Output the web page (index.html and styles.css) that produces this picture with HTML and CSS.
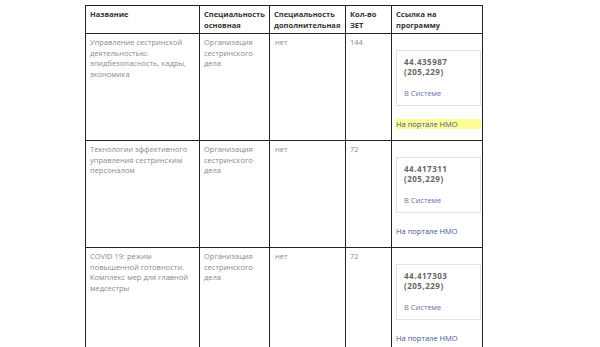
FILE: index.html
```html
<!DOCTYPE html>
<html lang="ru">
  <head>
    <meta charset="UTF-8" />
    <meta name="viewport" content="width=device-width, initial-scale=1.0" />
    <title>Программы</title>
    <link rel="stylesheet" href="styles.css">
  </head>
  <body>
    <!-- Таблица программ -->
    <table class="programs">
      <colgroup>
        <col class="col-name" />
        <col class="col-main" />
        <col class="col-extra" />
        <col class="col-zet" />
        <col class="col-link" />
      </colgroup>
      <thead>
        <tr>
          <th>Название</th>
          <th>Специальность основная</th>
          <th>Специальность дополнительная</th>
          <th>Кол-во ЗЕТ</th>
          <th>Ссылка на программу</th>
        </tr>
      </thead>
      <tbody>
        <tr>
          <td>Управление сестринской деятельностью: эпидбезопасность, кадры, экономика</td>
          <td>Организация сестринского дела</td>
          <td class="none">нет</td>
          <td>144</td>
          <td>
            <div class="program-card">
              <div class="program-code">44.435987 (205,229)</div>
              <a class="program-sys" href="#">В Системе</a>
            </div>
            <a class="nmo mark" href="#">На портале НМО</a>
          </td>
        </tr>
        <tr>
          <td>Технологии эффективного управления сестринским персоналом</td>
          <td>Организация сестринского дела</td>
          <td class="none">нет</td>
          <td>72</td>
          <td>
            <div class="program-card">
              <div class="program-code">44.417311 (205,229)</div>
              <a class="program-sys" href="#">В Системе</a>
            </div>
            <a class="nmo" href="#">На портале НМО</a>
          </td>
        </tr>
        <tr>
          <td>COVID 19: режим повышенной готовности. Комплекс мер для главной медсестры</td>
          <td>Организация сестринского дела</td>
          <td class="none">нет</td>
          <td>72</td>
          <td>
            <div class="program-card">
              <div class="program-code">44.417303 (205,229)</div>
              <a class="program-sys" href="#">В Системе</a>
            </div>
            <a class="nmo" href="#">На портале НМО</a>
          </td>
        </tr>
      </tbody>
    </table>
  </body>
</html>
```

FILE: styles.css
```css
/* Basic styling */
* {
  margin: 0;
  padding: 0;
  box-sizing: border-box;
}
body {
  background-color: #fff;
  color: #8a8a8a;
  font-family: "Open Sans", sans-serif;
  font-size: 7.5px;
  line-height: 10.5px;
}
.programs {
  margin: 5px 0 0 85px;
  border-collapse: collapse;
  table-layout: fixed;
  width: 397px;
}
.col-name { width: 114px; }
.col-main { width: 70px; }
.col-extra { width: 76px; }
.col-zet { width: 46px; }
.col-link { width: 91px; }
.programs th,
.programs td {
  border: 1px solid #222;
  text-align: left;
  vertical-align: top;
  padding: 3px 4px 2px 4px;
}
.programs th {
  color: #333;
  font-weight: 700;
  line-height: 11px;
}
.programs td {
  padding-bottom: 11px;
}
.programs td.none {
  padding-left: 5px;
}
.program-card {
  margin-top: 13px;
  border: 1px solid #e2e2e2;
  padding: 6px 6px 6px 7px;
  width: 85px;
}
.program-code {
  color: #666;
  font-weight: 700;
  font-size: 8px;
  line-height: 9.5px;
  letter-spacing: 0.5px;
  margin-bottom: 12px;
}
.program-sys {
  display: block;
  color: #6874a8;
  text-decoration: none;
}
.nmo {
  display: block;
  margin-top: 13px;
  color: #45579a;
  text-decoration: none;
}
.nmo.mark {
  background-color: #fdfd96;
  width: 85px;
}
```
